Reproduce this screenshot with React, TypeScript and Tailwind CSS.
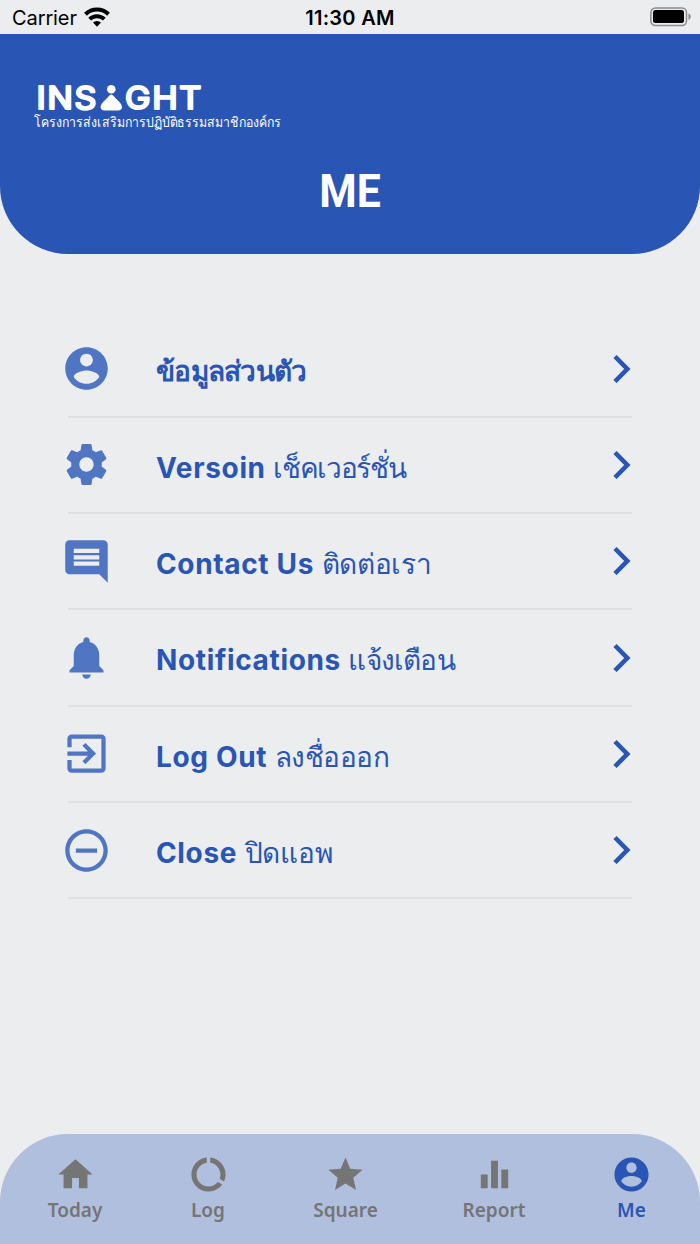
import React from 'react';
import { clsx } from 'clsx';

const ICONS = {
  account: 'M12 2C6.48 2 2 6.48 2 12s4.48 10 10 10 10-4.48 10-10S17.52 2 12 2zm0 3c1.66 0 3 1.34 3 3s-1.34 3-3 3-3-1.34-3-3 1.34-3 3-3zm0 14.2c-2.5 0-4.71-1.28-6-3.22.03-1.99 4-3.08 6-3.08 1.99 0 5.97 1.09 6 3.08-1.29 1.94-3.5 3.22-6 3.22z',
  settings: 'M19.43 12.98c.04-.32.07-.64.07-.98s-.03-.66-.07-.98l2.11-1.65c.19-.15.24-.42.12-.64l-2-3.46c-.12-.22-.39-.3-.61-.22l-2.49 1c-.52-.4-1.08-.73-1.69-.98l-.38-2.65C14.46 2.18 14.25 2 14 2h-4c-.25 0-.46.18-.49.42l-.38 2.65c-.61.25-1.17.59-1.69.98l-2.49-1c-.23-.09-.49 0-.61.22l-2 3.46c-.13.22-.07.49.12.64l2.11 1.65c-.04.32-.07.65-.07.98s.03.66.07.98l-2.11 1.65c-.19.15-.24.42-.12.64l2 3.46c.12.22.39.3.61.22l2.49-1c.52.4 1.08.73 1.69.98l.38 2.65c.03.24.24.42.49.42h4c.25 0 .46-.18.49-.42l.38-2.65c.61-.25 1.17-.59 1.69-.98l2.49 1c.23.09.49 0 .61-.22l2-3.46c.12-.22.07-.49-.12-.64l-2.11-1.65zM12 15.5c-1.93 0-3.5-1.57-3.5-3.5s1.57-3.5 3.5-3.5 3.5 1.57 3.5 3.5-1.57 3.5-3.5 3.5z',
  comment: 'M21.99 4c0-1.1-.89-2-1.99-2H4c-1.1 0-2 .9-2 2v12c0 1.1.9 2 2 2h14l4 4-.01-18zM18 14H6v-2h12v2zm0-3H6V9h12v2zm0-3H6V6h12v2z',
  bell: 'M12 22c1.1 0 2-.9 2-2h-4c0 1.1.89 2 2 2zm6-6v-5c0-3.07-1.64-5.64-4.5-6.32V4c0-.83-.67-1.5-1.5-1.5s-1.5.67-1.5 1.5v.68C7.63 5.36 6 7.92 6 11v5l-2 2v1h16v-1l-2-2z',
  exit: 'M10.09 15.59L11.5 17l5-5-5-5-1.41 1.41L12.67 11H3v2h9.67l-2.58 2.59zM19 3H5c-1.11 0-2 .9-2 2v4h2V5h14v14H5v-4H3v4c0 1.1.89 2 2 2h14c1.1 0 2-.9 2-2V5c0-1.1-.9-2-2-2z',
  minus: 'M7 11v2h10v-2H7zm5-9C6.48 2 2 6.48 2 12s4.48 10 10 10 10-4.48 10-10S17.52 2 12 2zm0 18c-4.41 0-8-3.59-8-8s3.59-8 8-8 8 3.59 8 8-3.59 8-8 8z',
  home: 'M10 20v-6h4v6h5v-8h3L12 3 2 12h3v8z',
  usage: 'M13 2.05v3.03c3.39.49 6 3.39 6 6.92 0 .9-.18 1.75-.48 2.54l2.6 1.53c.56-1.24.88-2.62.88-4.07 0-5.18-3.95-9.45-9-9.95zM12 19c-3.87 0-7-3.13-7-7 0-3.53 2.61-6.43 6-6.92V2.05c-5.06.5-9 4.76-9 9.95 0 5.52 4.47 10 9.99 10 3.31 0 6.24-1.61 8.06-4.09l-2.6-1.53C16.17 17.98 14.21 19 12 19z',
  star: 'M12 17.27L18.18 21l-1.64-7.03L22 9.24l-7.19-.61L12 2 9.19 8.63 2 9.24l5.46 4.73L5.82 21z',
  chart: 'M10 20h4V4h-4v16zm-6 0h4v-8H4v8zM16 9v11h4V9h-4z',
};

type IconName = keyof typeof ICONS;

const Icon: React.FC<{ name: IconName; className?: string }> = ({ name, className }) => (
  <svg viewBox="0 0 24 24" fill="currentColor" className={className}>
    <path d={ICONS[name]} />
  </svg>
);

interface MenuItem {
  icon: IconName;
  label?: string;
  thai: string;
  thaiClass: string;
}

const MENU: MenuItem[] = [
  { icon: 'account', thai: 'ข้อมูลส่วนตัว', thaiClass: 'font-bold tracking-[-0.75px]' },
  { icon: 'settings', label: 'Versoin', thai: 'เช็คเวอร์ชั่น', thaiClass: 'tracking-[-1.3px]' },
  { icon: 'comment', label: 'Contact Us', thai: 'ติดต่อเรา', thaiClass: 'tracking-[-0.3px]' },
  { icon: 'bell', label: 'Notifications', thai: 'แจ้งเตือน', thaiClass: 'tracking-[-0.8px]' },
  { icon: 'exit', label: 'Log Out', thai: 'ลงชื่อออก', thaiClass: 'tracking-[-0.5px]' },
  { icon: 'minus', label: 'Close', thai: 'ปิดแอพ', thaiClass: 'tracking-[-0.1px]' },
];

const TABS: { icon: IconName; label: string; width: string; active?: boolean }[] = [
  { icon: 'home', label: 'Today', width: 'w-[150px]' },
  { icon: 'usage', label: 'Log', width: 'w-[116px]' },
  { icon: 'star', label: 'Square', width: 'w-[159px]' },
  { icon: 'chart', label: 'Report', width: 'w-[138px]' },
  { icon: 'account', label: 'Me', width: 'w-[137px]', active: true },
];

const StatusBar = () => (
  <div className="grid h-[34px] grid-cols-3 items-center px-3 pt-0.5 text-[20px] text-black">
    <div className="flex items-center gap-[7px]">
      <span className="tracking-[-0.1px]">Carrier</span>
      <svg viewBox="0 0 26 19" className="-mt-0.5 h-[19px] w-[26px] overflow-visible">
        <g fill="none" stroke="#000" strokeWidth="4">
          <path d="M1.500 6.300a16.400 16.400 0 0 1 23 0" />
          <path d="M5.700 11.200a10.400 10.400 0 0 1 14.600 0" />
        </g>
        <path d="M13 18.800l-4-4.200a5.700 5.700 0 0 1 8 0z" />
      </svg>
    </div>
    <span className="text-center font-semibold tracking-[0.3px]">11:30 AM</span>
    <svg viewBox="0 0 42 20" className="-mr-1 -mt-0.5 h-5 w-[42px] justify-self-end">
      <rect x=".9" y=".9" width="35.600" height="17.600" rx="4.500" fill="none" stroke="#8b8c8d" strokeWidth="1.500" />
      <rect x="3" y="3" width="31" height="13" rx="2.500" />
      <path d="M38.500 6.500c3 1 3 5.400 0 6.400z" fill="#8b8c8d" />
    </svg>
  </div>
);

const Logo = () => (
  <div className="pl-[34px] text-white">
    {/* round joins soften the letter corners of the wordmark */}
    <svg viewBox="0 0 170 30" fill="currentColor" className="h-[30px] w-[170px] overflow-visible">
      <g className="font-['Inter',sans-serif] text-[31px] font-normal tracking-[1.5px]" stroke="currentColor" strokeWidth="2.200" strokeLinejoin="round">
        <text x="2.500" y="27" textLength="61.500" lengthAdjust="spacingAndGlyphs">INS</text>
        <text x="91" y="27" textLength="78" lengthAdjust="spacingAndGlyphs">GHT</text>
      </g>
      <circle cx="77.300" cy="7.300" r="4.300" />
      <path d="M77.300 12.500c.8 0 2 1 3 2.200 2.700 3.100 7.700 6.800 7.700 10.500 0 2.500-2 3.200-4 3.200h-13.400c-2 0-4-.7-4-3.200 0-3.700 5-7.400 7.700-10.500 1-1.200 2.200-2.200 3-2.200z" />
    </svg>
    <p className="h-5 w-[290px] origin-left scale-x-[0.88] text-[14px] leading-5 font-medium whitespace-nowrap">โครงการส่งเสริมการปฏิบัติธรรมสมาชิกองค์กร</p>
  </div>
);

const App: React.FC = () => (
  <div className="flex h-[1244px] w-[700px] flex-col overflow-hidden bg-[#ebedee] font-['Inter',sans-serif]">
    <StatusBar />

    <header className="h-[219.5px] rounded-b-[68px] bg-[#2955b4] pt-[48px]">
      <Logo />
      <h1 className="mt-[27px] scale-x-[0.93] text-center font-['Roboto',sans-serif] text-[46px] leading-[64px] font-bold text-white">ME</h1>
    </header>

    <main className="flex-1 px-[68px] pt-[68px] text-[#2955b4]">
      {MENU.map(item => (
        <div key={item.icon} className="flex h-[96.3px] items-center border-b-2 border-[#dfe0e2]">
          <div className="-ml-[7px] flex size-[51px] shrink-0 items-center justify-center text-[#5076c3]">
            <Icon name={item.icon} className={item.icon === 'settings' ? 'size-[49px]' : 'size-[51px]'} />
          </div>
          <div className="ml-11 flex-1 pt-[5.5px] text-[28px] leading-10 whitespace-nowrap">
            {item.label && <span className="mr-[7.5px] font-bold tracking-[0.65px]">{item.label}</span>}
            <span className={item.thaiClass}>{item.thai}</span>
          </div>
          <svg viewBox="0 0 20 30" fill="none" stroke="currentColor" strokeWidth="4.600" className="h-[30px] w-5">
            <path d="M3 2.500L15.300 15 3 27.500" />
          </svg>
        </div>
      ))}
    </main>

    <nav className="flex h-[110px] rounded-t-[68px] bg-[#b1bfde] pt-5 font-['Noto_Sans',sans-serif] text-[19px] font-semibold">
      {TABS.map(tab => (
        <div key={tab.label} className={clsx('flex flex-col items-center', tab.width, tab.active ? 'text-[#2955b4]' : 'text-[#757575]')}>
          <Icon name={tab.icon} className="size-[41px]" />
          <span className="leading-[30px]">{tab.label}</span>
        </div>
      ))}
    </nav>
  </div>
);

export default App;
